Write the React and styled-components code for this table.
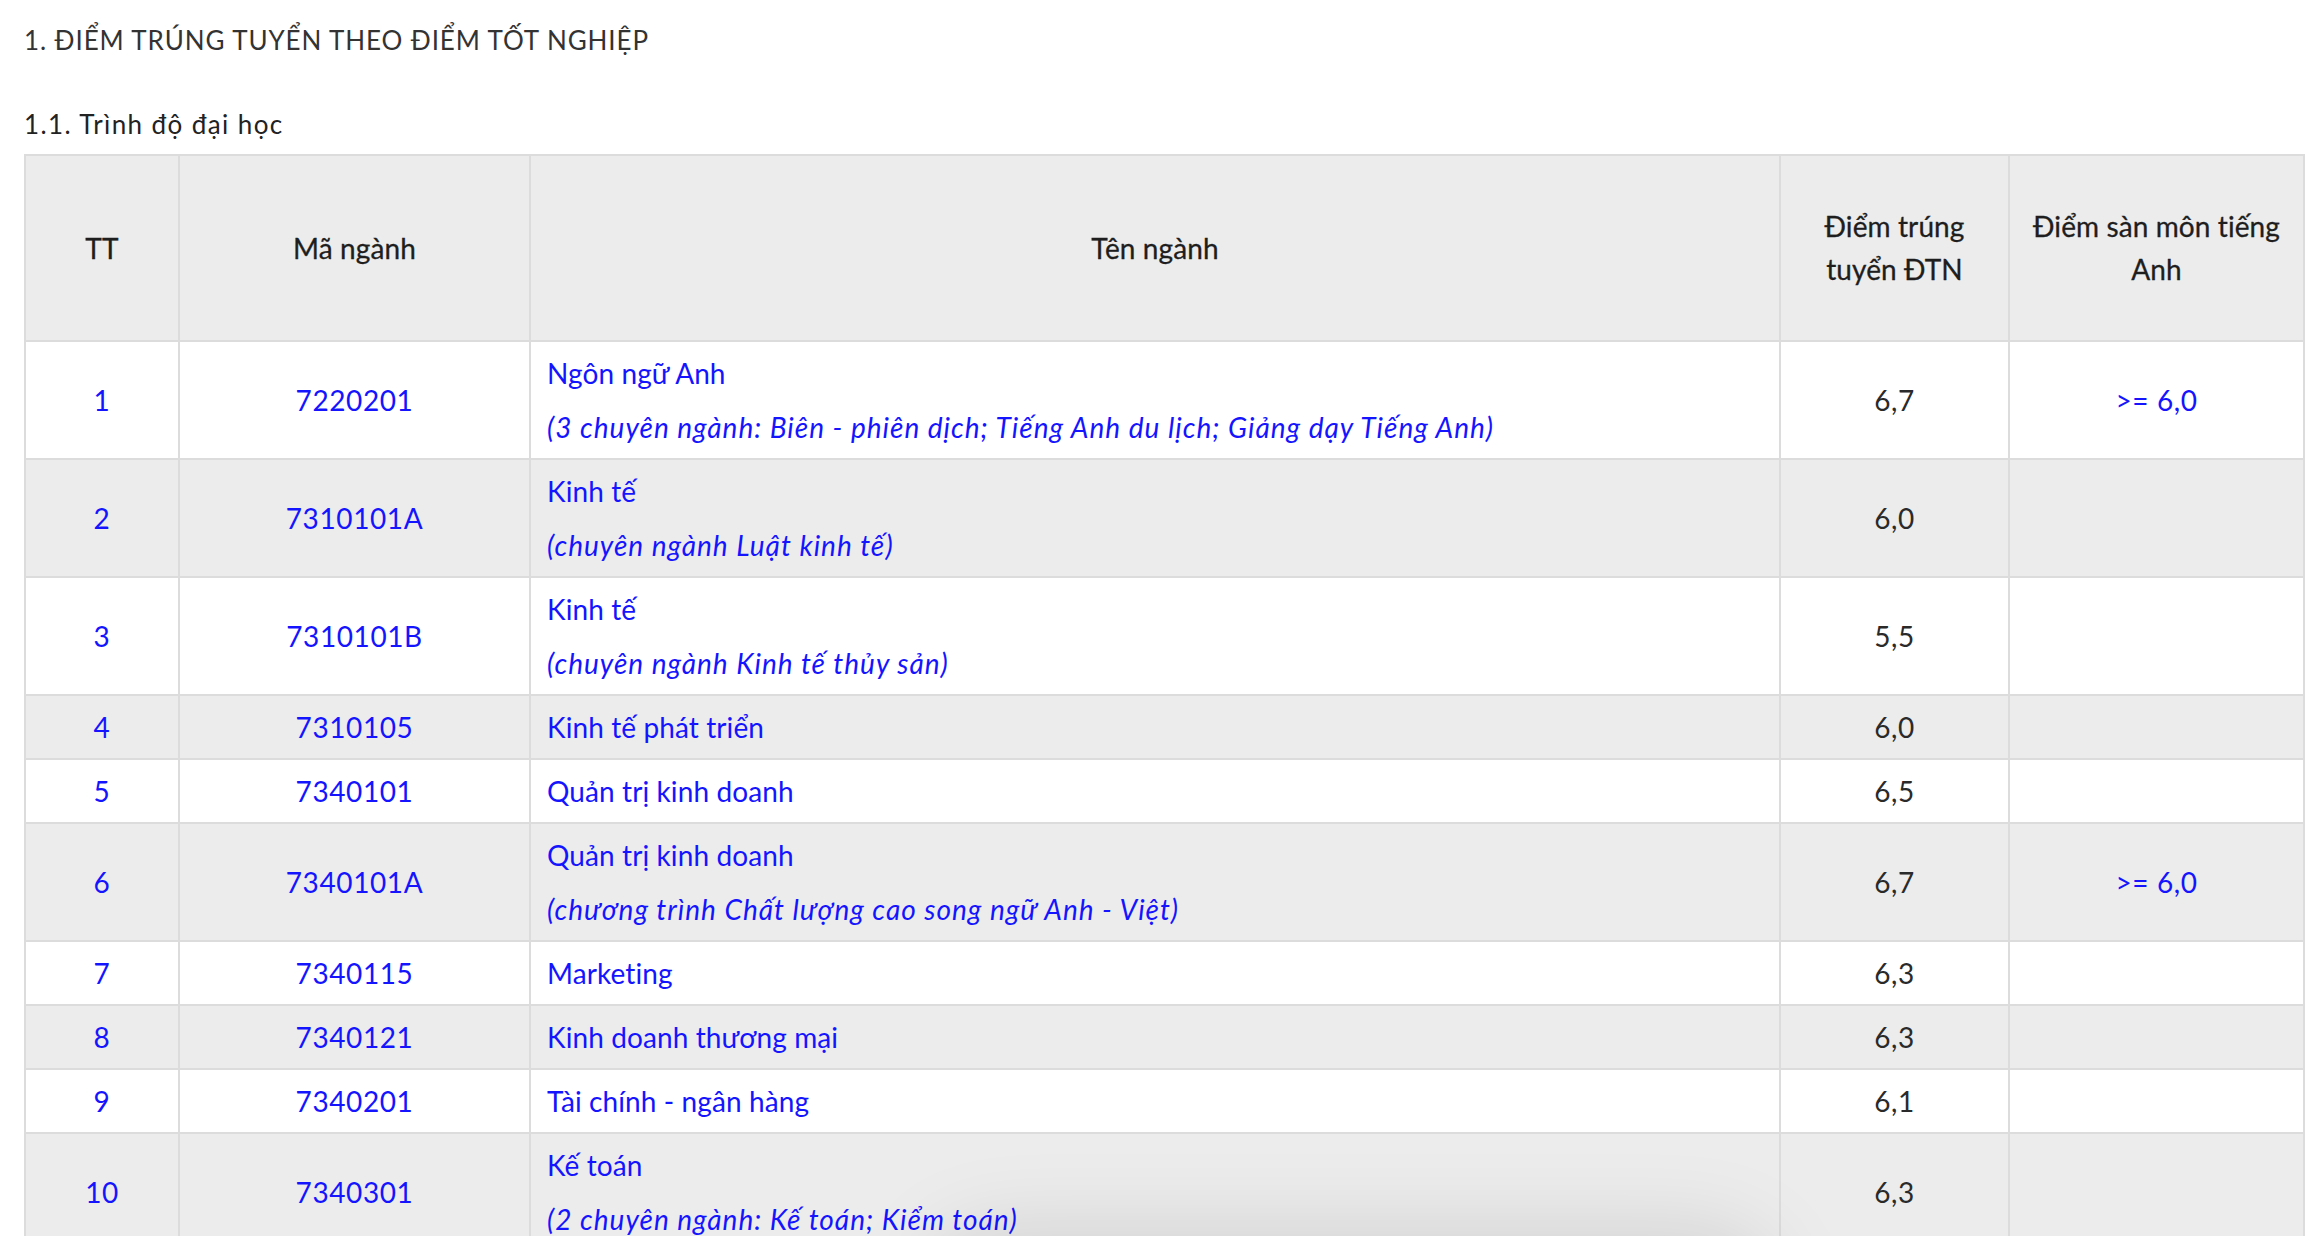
import React from "react";
import styled, { createGlobalStyle } from "styled-components";

const GlobalStyle = createGlobalStyle`
  html, body {
    margin: 0;
    padding: 0;
    background: #fff;
  }
  body {
    font-family: Lato, "Noto Sans", sans-serif;
    color: #333;
  }
`;

const Page = styled.div`
  padding: 20px 21px 0 24px;
`;

const Title = styled.h3`
  margin: 0;
  font-size: 26px;
  font-weight: normal;
  line-height: 40px;
  letter-spacing: 0.9px;
  color: #333;
`;

const SubTitle = styled.h4`
  margin: 44px 0 10px;
  font-size: 26px;
  font-weight: normal;
  line-height: 40px;
  letter-spacing: 1.4px;
  color: #222;
`;

const Table = styled.table`
  width: 100%;
  table-layout: fixed;
  border-collapse: collapse;
  border: 2px solid #dcdcdc;
  font-size: 28px;
`;

const Th = styled.th`
  background: #ececec;
  border: 2px solid #dcdcdc;
  padding: 49px 10px;
  line-height: 43px;
  font-weight: normal;
  letter-spacing: 0.1px;
  color: #1e1e1e;
  text-align: center;
  -webkit-text-stroke: 0.3px #1e1e1e;
`;

const Row = styled.tr`
  background: ${props => (props.$gray ? "#ececec" : "#fff")};
`;

const Td = styled.td`
  border: 2px solid #dcdcdc;
  padding: 4px ${props => (props.$left ? "16px" : "10px")};
  line-height: 54px;
  letter-spacing: ${props => (props.$left ? "0.1px" : "0.6px")};
  text-align: ${props => (props.$left ? "left" : "center")};
  color: ${props => (props.$dark ? "#2a2a2a" : "#1414ff")};
  vertical-align: middle;
`;

const Note = styled.em`
  font-style: italic;
  letter-spacing: 1px;
`;

const Shade = styled.div`
  position: fixed;
  left: 960px;
  bottom: -230px;
  width: 780px;
  height: 200px;
  border-radius: 30px;
  box-shadow: 0 0 90px 30px rgba(0, 0, 0, 0.13);
  pointer-events: none;
`;

const rows = [
  { tt: 1, code: "7220201", name: "Ngôn ngữ Anh", note: "(3 chuyên ngành: Biên - phiên dịch; Tiếng Anh du lịch; Giảng dạy Tiếng Anh)", score: "6,7", min: ">= 6,0" },
  { tt: 2, code: "7310101A", name: "Kinh tế", note: "(chuyên ngành Luật kinh tế)", score: "6,0" },
  { tt: 3, code: "7310101B", name: "Kinh tế", note: "(chuyên ngành Kinh tế thủy sản)", score: "5,5" },
  { tt: 4, code: "7310105", name: "Kinh tế phát triển", score: "6,0" },
  { tt: 5, code: "7340101", name: "Quản trị kinh doanh", score: "6,5" },
  { tt: 6, code: "7340101A", name: "Quản trị kinh doanh", note: "(chương trình Chất lượng cao song ngữ Anh - Việt)", score: "6,7", min: ">= 6,0" },
  { tt: 7, code: "7340115", name: "Marketing", score: "6,3" },
  { tt: 8, code: "7340121", name: "Kinh doanh thương mại", score: "6,3" },
  { tt: 9, code: "7340201", name: "Tài chính - ngân hàng", score: "6,1" },
  { tt: 10, code: "7340301", name: "Kế toán", note: "(2 chuyên ngành: Kế toán; Kiểm toán)", score: "6,3" },
];

const App = () => (
  <Page>
    <GlobalStyle />
    <Title>1. ĐIỂM TRÚNG TUYỂN THEO ĐIỂM TỐT NGHIỆP</Title>
    <SubTitle>1.1. Trình độ đại học</SubTitle>
    <Table>
      <colgroup>
        <col style={{ width: 154 }} />
        <col style={{ width: 351 }} />
        <col style={{ width: 1250 }} />
        <col style={{ width: 229 }} />
        <col style={{ width: 295 }} />
      </colgroup>
      <thead>
        <tr>
          <Th>TT</Th>
          <Th>Mã ngành</Th>
          <Th>Tên ngành</Th>
          <Th>Điểm trúng<br />tuyển ĐTN</Th>
          <Th>Điểm sàn môn tiếng<br />Anh</Th>
        </tr>
      </thead>
      <tbody>
        {rows.map((r, i) => (
          <Row key={r.tt} $gray={i % 2 === 1}>
            <Td>{r.tt}</Td>
            <Td>{r.code}</Td>
            <Td $left>
              {r.name}
              {r.note && (
                <>
                  <br />
                  <Note>{r.note}</Note>
                </>
              )}
            </Td>
            <Td $dark>{r.score}</Td>
            <Td>{r.min}</Td>
          </Row>
        ))}
      </tbody>
    </Table>
    <Shade />
  </Page>
);

export default App;
